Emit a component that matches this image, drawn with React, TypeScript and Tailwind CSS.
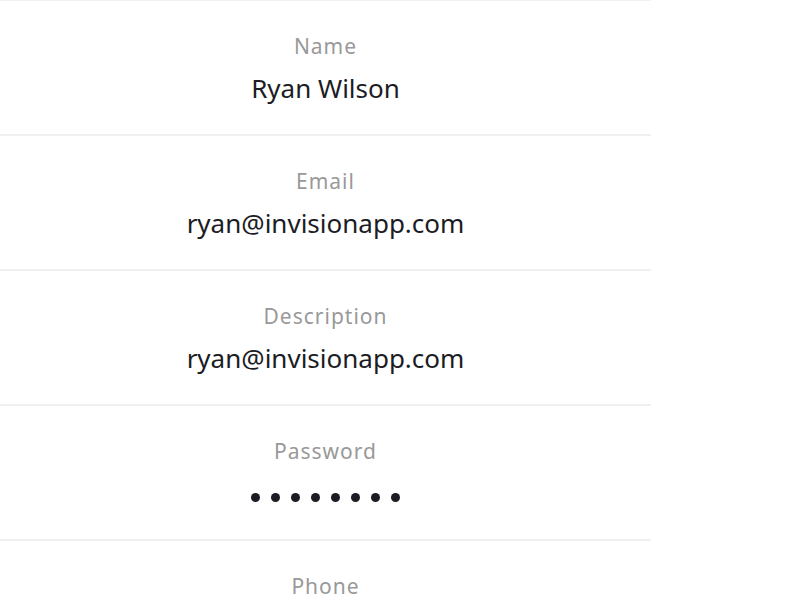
import React from "react";

const rows = [
  { label: "Name", value: "Ryan Wilson" },
  { label: "Email", value: "ryan@invisionapp.com" },
  { label: "Description", value: "ryan@invisionapp.com" },
  { label: "Password", value: "" },
  { label: "Phone", value: "" },
];

export default function App() {
  return (
    <div className="w-[800px] h-[600px] overflow-hidden bg-white" style={{ fontFamily: "'Noto Sans', sans-serif" }}>
      <div className="w-[651px] h-px bg-[#f0f0f0]" />
      {rows.map((r, i) => (
        <div key={i} className="w-[651px] h-[135px] border-b-2 border-[#f0f0f0] flex flex-col items-center">
          <div className="mt-[31px] text-[21px] leading-[28px] tracking-[1px] text-[#999999]">{r.label}</div>
          {r.label === "Password" ? (
            <div className="mt-[28px] flex gap-[11px]">
              {Array.from({ length: 8 }).map((_, j) => (
                <span key={j} className="w-[9px] h-[9px] rounded-full bg-[#1c1c24]" />
              ))}
            </div>
          ) : (
            <div className="mt-[11px] text-[26px] leading-[34px] text-[#1c1c24]">{r.value}</div>
          )}
        </div>
      ))}
    </div>
  );
}
